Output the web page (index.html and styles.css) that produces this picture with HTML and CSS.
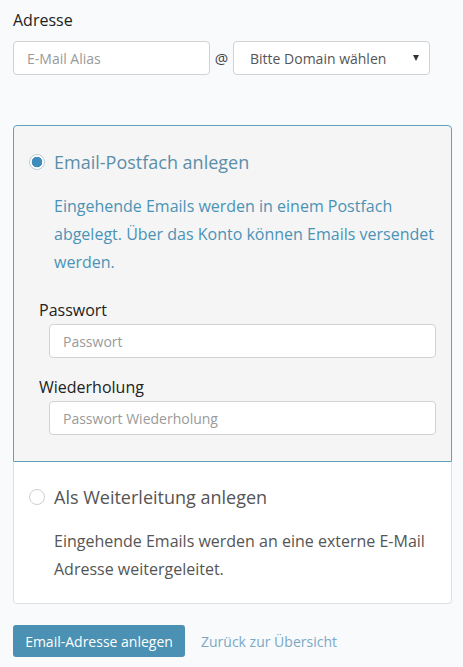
FILE: index.html
```html
<!DOCTYPE html>
<html lang="de">
<head>
<meta charset="utf-8">
<link rel="stylesheet" href="styles.css">
</head>
<body>
<div class="page">
  <div class="field-label">Adresse</div>
  <div class="address-row">
    <div class="input alias"><span class="ph">E-Mail Alias</span></div>
    <span class="at">@</span>
    <div class="input select"><span class="val">Bitte Domain wählen</span><span class="caret"></span></div>
  </div>

  <div class="panel-group">
    <div class="panel active">
      <div class="radio-row">
        <span class="radio checked"></span>
        <span class="radio-label">Email-Postfach anlegen</span>
      </div>
      <p class="desc">Eingehende Emails werden in einem Postfach abgelegt. Über das Konto können Emails versendet werden.</p>
      <div class="sub-label">Passwort</div>
      <div class="input sub-input"><span class="ph">Passwort</span></div>
      <div class="sub-label second">Wiederholung</div>
      <div class="input sub-input"><span class="ph">Passwort Wiederholung</span></div>
    </div>
    <div class="panel plain">
      <div class="radio-row">
        <span class="radio"></span>
        <span class="radio-label">Als Weiterleitung anlegen</span>
      </div>
      <p class="desc">Eingehende Emails werden an eine externe E-Mail Adresse weitergeleitet.</p>
    </div>
  </div>

  <div class="actions">
    <span class="btn">Email-Adresse anlegen</span>
    <span class="link">Zurück zur Übersicht</span>
  </div>
</div>
</body>
</html>
```

FILE: styles.css
```css
html, body {
  margin: 0;
  padding: 0;
  background: #f8fafc;
  font-family: "Open Sans", "Noto Sans", sans-serif;
  color: #333;
}
.page {
  padding: 10px 11px 0 13px;
}
.field-label {
  font-size: 16px;
  line-height: 20px;
  color: #222;
}
.address-row {
  display: flex;
  align-items: center;
  margin-top: 11px;
}
.input {
  box-sizing: border-box;
  height: 34px;
  background: #fff;
  border: 1px solid #cfd3d6;
  border-radius: 4px;
  display: flex;
  align-items: center;
  padding-left: 13px;
  font-size: 14px;
}
.ph {
  color: #9a9a9a;
}
.alias {
  width: 197px;
}
.at {
  width: 23px;
  text-align: center;
  font-size: 15px;
  color: #444;
}
.select {
  width: 197px;
  padding-left: 16px;
  padding-right: 10px;
  justify-content: space-between;
}
.select .val {
  color: #555;
}
.caret {
  width: 0;
  height: 0;
  border-left: 3px solid transparent;
  border-right: 3px solid transparent;
  border-top: 6px solid #333;
}
.panel-group {
  margin-top: 50px;
  width: 439px;
  border-radius: 4px;
  background: #fff;
}
.panel {
  box-sizing: border-box;
}
.panel.active {
  background: #f5f5f5;
  border: 1px solid #5ea3bb;
  border-radius: 4px 4px 0 0;
  padding: 27px 15px 26px 15px;
}
.panel.plain {
  border: 1px solid #e0e0e0;
  border-top: none;
  border-radius: 0 0 4px 4px;
  padding: 26px 15px 20px 15px;
  background: #fff;
}
.radio-row {
  display: flex;
  align-items: center;
  height: 18px;
}
.radio {
  box-sizing: border-box;
  width: 16px;
  height: 16px;
  border-radius: 50%;
  border: 1px solid #cfcfcf;
  background: #fff;
  margin-right: 9px;
  flex: none;
}
.radio.checked {
  background: radial-gradient(circle, #3d8cbc 0, #3d8cbc 5px, #fff 5.6px);
  border-color: #b9cdd8;
}
.radio-label {
  font-size: 18px;
  line-height: 18px;
  color: #555;
}
.active .radio-label {
  color: #5a8fa9;
}
.desc {
  margin: 21px 0 0 25px;
  font-size: 16px;
  line-height: 28px;
  color: #555;
}
.active .desc {
  color: #4b93b5;
}
.sub-label {
  margin: 24px 0 0 10px;
  font-size: 16px;
  line-height: 20px;
  color: #222;
}
.sub-label.second {
  margin-top: 19px;
}
.sub-input {
  margin: 4px 0 0 20px;
  width: 387px;
}
.actions {
  display: flex;
  align-items: center;
  margin-top: 21px;
}
.btn {
  box-sizing: border-box;
  width: 172px;
  height: 32px;
  background: #4a91b3;
  color: #fff;
  font-size: 14px;
  border-radius: 3px;
  display: flex;
  align-items: center;
  justify-content: center;
}
.link {
  margin-left: 16px;
  font-size: 14px;
  color: #7ca8c4;
}
```
